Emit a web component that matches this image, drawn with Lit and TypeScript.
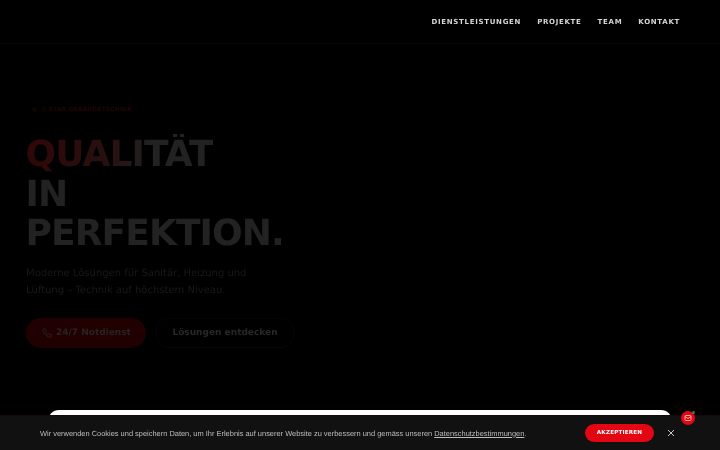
import { LitElement, html, css } from "lit";
import { customElement } from "lit/decorators.js";

@customElement("app-root")
export class AppRoot extends LitElement {
  static styles = css`
    :host { display: block; position: relative; width: 720px; height: 450px; overflow: hidden; background: #000; font-family: "DejaVu Sans", sans-serif; text-rendering: geometricPrecision; filter: blur(0.25px); }
    header { height: 43px; border-bottom: 1px solid #060606; display: flex; justify-content: flex-end; align-items: center; gap: 16px; padding: 0 40px 0 0; }
    header a { font-size: 7px; font-weight: 700; letter-spacing: 0.7px; color: #d4d4d4; }
    .hero { padding: 59px 26px 0; display: flex; flex-direction: column; align-items: flex-start; }
    .badge { display: flex; align-items: center; gap: 4px; font-size: 6px; font-weight: 700; letter-spacing: 0.15px; color: #230404; height: 12px; margin-left: 5px; }
    .badge svg { display: block; }
    h1 { margin: 20px 0 0 -0.5px; font-size: 36px; line-height: 39.6px; font-weight: 700; letter-spacing: -0.9px; color: #222; }
    h1 .grad { background: linear-gradient(90deg, #300707 0%, #281010 45%, #222 68%); -webkit-background-clip: text; background-clip: text; color: transparent; }
    p { margin: 11px 0 0; font-size: 10px; line-height: 17px; color: #191919; width: 230px; }
    .actions { display: flex; gap: 10px; margin-top: 19px; }
    .btn { height: 30px; box-sizing: border-box; display: flex; align-items: center; gap: 4px; font-size: 9px; font-weight: 700; white-space: nowrap; }
    .primary { background: #200000; color: #2a2222; padding: 0 15.5px 0 16px; border-radius: 15px; }
    .primary svg { display: block; }
    .secondary { color: #282828; padding: 0 15px; border: 1px solid #060606; border-radius: 12px; }
    .strip { position: absolute; left: 48px; width: 624px; top: 410px; height: 12px; background: #fff; border-radius: 11px 11px 0 0; }
    .cookie { position: absolute; left: 0; right: 0; bottom: 0; height: 35px; background: #111; border-top: 1px solid #1a0808; box-sizing: border-box; display: flex; align-items: center; padding: 0 45px 0 40px; font-family: "Liberation Sans", sans-serif; font-size: 7.45px; color: #bdbdbd; white-space: nowrap; }
    .cookie u { color: #bdbdbd; }
    .text { flex: 1; }
    .accept { background: #e30613; color: #fff; font-family: "DejaVu Sans", sans-serif; font-size: 5.6px; font-weight: 700; letter-spacing: 0.2px; height: 18px; width: 69px; display: flex; align-items: center; justify-content: center; border-radius: 9px; margin-right: 13px; }
    .close { display: block; }
    .chat { position: absolute; left: 681px; top: 411px; width: 14px; height: 14px; border-radius: 50%; background: #e30613; display: flex; align-items: center; justify-content: center; }
    .dot { position: absolute; right: 0; top: 0; width: 3px; height: 3px; border-radius: 50%; background: #3d7a4a; }
  `;

  render() {
    return html`
      <header>
        <a>DIENSTLEISTUNGEN</a><a>PROJEKTE</a><a>TEAM</a><a>KONTAKT</a>
      </header>
      <section class="hero">
        <div class="badge">
          <svg width="7" height="7" viewBox="0 0 8 8" fill="#1a0303"><path d="M4 0.5l1 2.3 2.5.2-1.9 1.6.6 2.4L4 5.7 1.8 7l.6-2.4L.5 3l2.5-.2z"/></svg>
          5 STAR GEBÄUDETECHNIK
        </div>
        <h1><span class="grad">QUALITÄT</span><br />IN<br />PERFEKTION.</h1>
        <p>Moderne Lösungen für Sanitär, Heizung und Lüftung – Technik auf höchstem Niveau.</p>
        <div class="actions">
          <div class="btn primary">
            <svg width="10" height="10" viewBox="0 0 24 24" fill="none" stroke="#2a2222" stroke-width="2.4" stroke-linecap="round" stroke-linejoin="round"><path d="M22 16.9v3a2 2 0 0 1-2.2 2 19.8 19.8 0 0 1-8.6-3.1 19.5 19.5 0 0 1-6-6A19.8 19.8 0 0 1 2.1 4.2 2 2 0 0 1 4.1 2h3a2 2 0 0 1 2 1.7c.1 1 .4 1.9.7 2.8a2 2 0 0 1-.5 2.1L8.1 9.9a16 16 0 0 0 6 6l1.3-1.3a2 2 0 0 1 2.1-.4c.9.3 1.8.5 2.8.7a2 2 0 0 1 1.7 2z"/></svg>
            24/7 Notdienst
          </div>
          <div class="btn secondary">Lösungen entdecken</div>
        </div>
      </section>
      <div class="strip"></div>
      <div class="cookie">
        <div class="text">Wir verwenden Cookies und speichern Daten, um Ihr Erlebnis auf unserer Website zu verbessern und gemäss unseren <u>Datenschutzbestimmungen</u>.</div>
        <div class="accept">AKZEPTIEREN</div>
        <svg class="close" width="8" height="8" viewBox="0 0 8 8" stroke="#c8c8c8" stroke-width="1"><path d="M1 1l6 6M7 1L1 7"/></svg>
      </div>
      <div class="chat">
        <svg width="8" height="8" viewBox="0 0 8 8" fill="none" stroke="#ffd0d0" stroke-width="0.8"><rect x="1" y="1.5" width="6" height="5" rx="0.8"/><path d="M1 2.5l3 2 3-2"/></svg>
        <span class="dot"></span>
      </div>
    `;
  }
}
